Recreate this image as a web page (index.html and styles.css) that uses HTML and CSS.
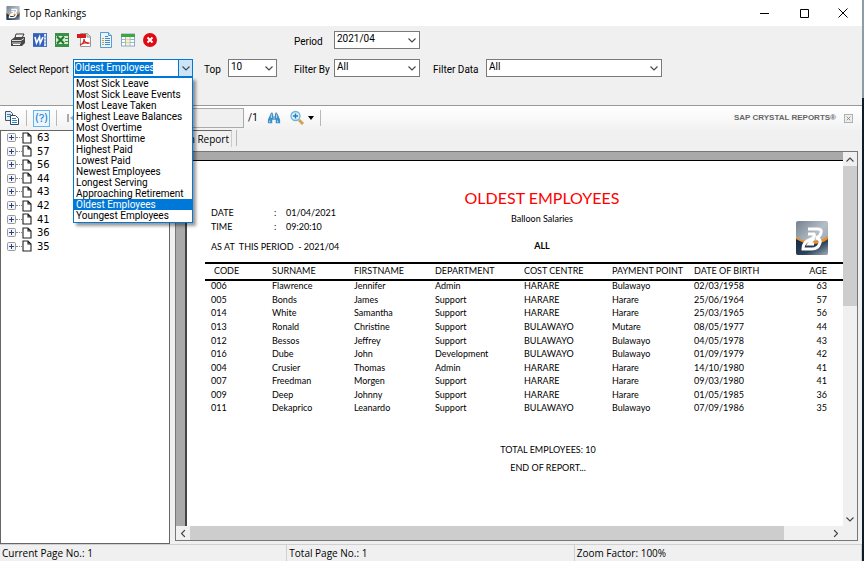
FILE: index.html
```html
<!DOCTYPE html>
<html lang="en">
<head>
<meta charset="utf-8">
<title>Top Rankings</title>
<link rel="stylesheet" href="styles.css">
</head>
<body>
<svg class="defs" aria-hidden="true">
  <defs>
    <linearGradient id="steel" x1="0" y1="0" x2="1" y2="1"><stop offset="0" stop-color="#75818f"/><stop offset=".5" stop-color="#b4bec8"/><stop offset="1" stop-color="#8b98a6"/></linearGradient>
    <linearGradient id="navy" x1="0" y1="0" x2="1" y2="1"><stop offset="0" stop-color="#12263f"/><stop offset=".6" stop-color="#2c435c"/><stop offset="1" stop-color="#a3afba"/></linearGradient>
    <symbol id="chev" viewBox="0 0 8 5"><path d="M.5.5 4 4 7.500.5" fill="none" stroke="#444" stroke-width="1.1"/></symbol>
    <symbol id="logo" viewBox="0 0 32 34">
      <rect width="32" height="34" rx="2" fill="url(#steel)"/>
      <path d="M0 17c6 4 10 5 15 5 7 0 12-2 17-6v16a2 2 0 0 1-2 2H2a2 2 0 0 1-2-2z" fill="url(#navy)"/>
      <path d="M0 16c6 4 10 4 15 4 7 0 12-1 17-5v3c-5 4-10 5-17 5-5 0-10-2-15-5z" fill="#f08a24"/>
      <path d="M12 8h10q4 0 3 4-1 4-5 5 5 1 4 5-2 6-8 6H7q0-5 4-8l6-3q2-2 1-4h-6M18 17l-5 6h5" fill="none" stroke="#fff" stroke-width="3"/>
    </symbol>
    <symbol id="page" viewBox="0 0 10 12"><path d="M1 1h5l3 3v7H1zM6 1v3h3" fill="#fff" stroke="#222" stroke-width="1.1"/></symbol>
    <symbol id="plus" viewBox="0 0 9 9"><rect x=".5" y=".5" width="8" height="8" rx="1" fill="#f4f4f4" stroke="#999"/><path d="M2 4.500h5M4.500 2v5" stroke="#24408c"/></symbol>
  </defs>
</svg>

<div class="window">
  <header class="titlebar">
    <svg class="app-icon"><use href="#logo"/></svg>
    <h1>Top Rankings</h1>
    <div class="caption-buttons">
      <button aria-label="Minimize"><svg viewBox="0 0 10 10"><path d="M0 5.500h9" stroke="#000"/></svg></button>
      <button aria-label="Maximize"><svg viewBox="0 0 10 10"><path d="M1.500 1.500h8v8h-8z" fill="none" stroke="#000"/></svg></button>
      <button aria-label="Close"><svg viewBox="0 0 10 10"><path d="M.5.5l9 9m0-9l-9 9" stroke="#000"/></svg></button>
    </div>
  </header>

  <form class="filters">
    <div class="exports">
      <button type="button" aria-label="Print"><svg viewBox="0 0 16 16"><path d="M5 6 6 2h8l-2 4" fill="#fff" stroke="#333"/><path d="M1 8l4-3h10v6l-3 3H1z" fill="#484848"/><path d="M2 8.500h9l3-2M2 11h9M7 4h5" stroke="#ddd" fill="none"/><path d="M3 12.500h7" stroke="#fff"/></svg></button>
      <button type="button" aria-label="Export to Word"><svg viewBox="0 0 16 16"><rect x="1.500" y="1.500" width="13" height="13" fill="#dce8fa" stroke="#4a74c4"/><path d="M1 2h11v12H1z" fill="#3462ba"/><path d="M3 5l1.500 6L7.500 5l.7 6L11 5" fill="none" stroke="#fff" stroke-width="1.600"/><path d="M12 5h2M12 8h2M12 11h2" stroke="#6e8fd0"/></svg></button>
      <button type="button" aria-label="Export to Excel"><svg viewBox="0 0 16 16"><rect x="1.500" y="1.500" width="13" height="13" fill="#d4ead4" stroke="#2f8a3c"/><path d="M1 1h14v3H1zM1 12h14v3H1z" fill="#3b8f46"/><path d="M3 4.500l7 7M10 4.500l-7 7" stroke="#1f7a2c" stroke-width="2.200"/><path d="M11 6.500h3M11 9.500h3" stroke="#3b8f46"/></svg></button>
      <button type="button" aria-label="Export to PDF"><svg viewBox="0 0 16 16"><path d="M4.500 1.500h7l3 3v10h-10z" fill="#fff" stroke="#999"/><path d="M11 1.500V5h3.500" fill="#ddd" stroke="#999"/><rect x="1" y="2" width="9" height="4" fill="#d51c1c"/><path d="M4 13c3-1 4-4 4-6 0 3 3 5 5 4-3-1-6 0-9 2z" fill="none" stroke="#d51c1c" stroke-width="1.200"/></svg></button>
      <button type="button" aria-label="Export to text"><svg viewBox="0 0 16 16"><path d="M2.500.5h8l3 3v12h-11z" fill="#eaf4fd" stroke="#5a9bd0"/><path d="M10.500.5v3h3" fill="#b7d7f0" stroke="#5a9bd0"/><path d="M7 4.500h3M7 6.500h5M7 8.500h5M7 10.500h5M7 12.500h5" stroke="#4a8ac4"/><path d="M4 6.500h2M4 8.500h2M4 10.500h2M4 12.500h2" stroke="#d0a030"/></svg></button>
      <button type="button" aria-label="Export to table"><svg viewBox="0 0 16 16"><rect x="1.500" y="2" width="13" height="12" fill="#fff" stroke="#88a8c0"/><path d="M1 2h14v3H1z" fill="#3da544"/><path d="M2 7.500h12M2 10.500h12M5.500 5v9M10 5v9" stroke="#9ab8cc"/><path d="M6 6h3.500v7H6z" fill="#f6e7a0" opacity=".7"/></svg></button>
      <button type="button" aria-label="Cancel"><svg viewBox="0 0 16 16"><circle cx="8" cy="8" r="7" fill="#e00a12"/><path d="M5.500 5.500l5 5m0-5l-5 5" stroke="#fff" stroke-width="2"/></svg></button>
    </div>
    <label for="period">Period</label>
    <div class="combo"><select id="period"><option>2021/04</option></select><svg class="chev"><use href="#chev"/></svg></div>

    <label class="row2" for="report">Select Report</label>
    <div class="combo open">
      <input id="report" value="Oldest Employees">
      <button type="button" aria-label="Show reports"><svg class="arrow"><use href="#chev"/></svg></button>
      <select class="menu" size="13" aria-label="Reports">
        <option>Most Sick Leave</option>
        <option>Most Sick Leave Events</option>
        <option>Most Leave Taken</option>
        <option>Highest Leave Balances</option>
        <option>Most Overtime</option>
        <option>Most Shorttime</option>
        <option>Highest Paid</option>
        <option>Lowest Paid</option>
        <option>Newest Employees</option>
        <option>Longest Serving</option>
        <option>Approaching Retirement</option>
        <option selected>Oldest Employees</option>
        <option>Youngest Employees</option>
      </select>
    </div>
    <label for="top">Top</label>
    <div class="combo top"><select id="top"><option>10</option></select><svg class="chev"><use href="#chev"/></svg></div>
    <label for="by">Filter By</label>
    <div class="combo"><select id="by"><option>All</option></select><svg class="chev"><use href="#chev"/></svg></div>
    <label for="data">Filter Data</label>
    <div class="combo data"><select id="data"><option>All</option></select><svg class="chev"><use href="#chev"/></svg></div>
  </form>

  <div class="tools">
    <button class="tool" aria-label="Copy"><svg viewBox="0 0 16 16"><path d="M1.500 1.500h5l2 2v7h-7z" fill="#e4eef6" stroke="#44586c"/><path d="M3 4.500h4M3 6.500h4" stroke="#3888c0"/><path d="M6.500 5.500h5l3 3v6h-8z" fill="#fff" stroke="#34485c"/><path d="M8 8.500h4M8 10.500h5M8 12.500h5" stroke="#2f86c4"/></svg></button>
    <span class="sep"></span>
    <button class="help" aria-label="Parameters">(?)</button>
    <span class="sep"></span>
    <button class="tool" aria-label="First page"><svg viewBox="0 0 16 16"><path d="M5 4v8" stroke="#aaa" stroke-width="2"/><path d="M12 4v8L7 8z" fill="#aaa"/></svg></button>
    <input class="page-no" aria-label="Page number" disabled>
    <span class="of">/1</span>
    <button class="tool find" aria-label="Find"><svg viewBox="0 0 16 16"><path d="M4 3h3v3h2V3h3l3 7v4h-5v-4H6v4H1v-4z" fill="#3f8fc8"/><path d="M5 4v4M11 4v4M3 11v2M12 11v2M8 6v3" stroke="#c8e6fa"/><path d="M4.500 2.500h2M9.500 2.500h2" stroke="#235e8c"/></svg></button>
    <button class="tool zoom" aria-label="Zoom"><svg viewBox="0 0 16 16"><path d="M10 10l4 4" stroke="#d9a04a" stroke-width="3"/><circle cx="6.500" cy="6" r="4.500" fill="#d4effc" stroke="#6ab4dc" stroke-width="1.300"/><path d="M4 6h5M6.500 3.500v5" stroke="#2878b8" stroke-width="1.300"/></svg><svg class="tri" viewBox="0 0 6 4"><path d="M0 0h6L3 4z"/></svg></button>
    <span class="sep"></span>
    <strong class="brand">SAP CRYSTAL REPORTS®</strong>
    <button class="close-view" aria-label="Close view"><svg viewBox="0 0 10 10"><rect x=".5" y=".5" width="9" height="9" fill="#eee" stroke="#aaa"/><path d="M3 3l4 4m0-4L3 7" stroke="#888"/></svg></button>
  </div>

  <main class="work">
    <ul class="tree">
      <li><svg class="plus"><use href="#plus"/></svg><i></i><svg class="pg"><use href="#page"/></svg>63</li>
      <li><svg class="plus"><use href="#plus"/></svg><i></i><svg class="pg"><use href="#page"/></svg>57</li>
      <li><svg class="plus"><use href="#plus"/></svg><i></i><svg class="pg"><use href="#page"/></svg>56</li>
      <li><svg class="plus"><use href="#plus"/></svg><i></i><svg class="pg"><use href="#page"/></svg>44</li>
      <li><svg class="plus"><use href="#plus"/></svg><i></i><svg class="pg"><use href="#page"/></svg>43</li>
      <li><svg class="plus"><use href="#plus"/></svg><i></i><svg class="pg"><use href="#page"/></svg>42</li>
      <li><svg class="plus"><use href="#plus"/></svg><i></i><svg class="pg"><use href="#page"/></svg>41</li>
      <li><svg class="plus"><use href="#plus"/></svg><i></i><svg class="pg"><use href="#page"/></svg>36</li>
      <li><svg class="plus"><use href="#plus"/></svg><i></i><svg class="pg"><use href="#page"/></svg>35</li>
    </ul>
    <section class="view">
      <div class="tabs"><button class="tab">Main Report</button><span class="sep"></span></div>
      <div class="viewer">
        <div class="desk">
          <article class="page">
            <div class="head">
              <dl>
                <dt>DATE</dt><dd>:</dd><dd>01/04/2021</dd>
                <dt>TIME</dt><dd>:</dd><dd>09:20:10</dd>
                <dt class="wide">AS AT&nbsp; THIS PERIOD&nbsp; - 2021/04</dt>
              </dl>
              <div class="center">
                <h2>OLDEST EMPLOYEES</h2>
                <p>Balloon Salaries</p>
                <b>ALL</b>
              </div>
              <svg class="logo"><use href="#logo"/></svg>
            </div>
            <table>
              <colgroup><col class="c1"><col class="c2"><col class="c3"><col class="c4"><col class="c5"><col class="c6"><col class="c7"><col></colgroup>
              <thead><tr><th>CODE</th><th>SURNAME</th><th>FIRSTNAME</th><th>DEPARTMENT</th><th>COST CENTRE</th><th>PAYMENT POINT</th><th>DATE OF BIRTH</th><th>AGE</th></tr></thead>
              <tbody>
                <tr><td>006</td><td>Flawrence</td><td>Jennifer</td><td>Admin</td><td>HARARE</td><td>Bulawayo</td><td>02/03/1958</td><td>63</td></tr>
                <tr><td>005</td><td>Bonds</td><td>James</td><td>Support</td><td>HARARE</td><td>Harare</td><td>25/06/1964</td><td>57</td></tr>
                <tr><td>014</td><td>White</td><td>Samantha</td><td>Support</td><td>HARARE</td><td>Harare</td><td>25/03/1965</td><td>56</td></tr>
                <tr><td>013</td><td>Ronald</td><td>Christine</td><td>Support</td><td>BULAWAYO</td><td>Mutare</td><td>08/05/1977</td><td>44</td></tr>
                <tr><td>012</td><td>Bessos</td><td>Jeffrey</td><td>Support</td><td>BULAWAYO</td><td>Bulawayo</td><td>04/05/1978</td><td>43</td></tr>
                <tr><td>016</td><td>Dube</td><td>John</td><td>Development</td><td>BULAWAYO</td><td>Bulawayo</td><td>01/09/1979</td><td>42</td></tr>
                <tr><td>004</td><td>Crusier</td><td>Thomas</td><td>Admin</td><td>HARARE</td><td>Harare</td><td>14/10/1980</td><td>41</td></tr>
                <tr><td>007</td><td>Freedman</td><td>Morgen</td><td>Support</td><td>HARARE</td><td>Harare</td><td>09/03/1980</td><td>41</td></tr>
                <tr><td>009</td><td>Deep</td><td>Johnny</td><td>Support</td><td>HARARE</td><td>Harare</td><td>01/05/1985</td><td>36</td></tr>
                <tr><td>011</td><td>Dekaprico</td><td>Leanardo</td><td>Support</td><td>BULAWAYO</td><td>Bulawayo</td><td>07/09/1986</td><td>35</td></tr>
              </tbody>
            </table>
            <footer><p>TOTAL EMPLOYEES: 10</p><p>END OF REPORT...</p></footer>
          </article>
        </div>
        <div class="bar vertical">
          <button aria-label="Scroll up"><svg class="up"><use href="#chev"/></svg></button>
          <span class="thumb"></span>
          <button aria-label="Scroll down"><svg><use href="#chev"/></svg></button>
        </div>
        <div class="bar horizontal">
          <button aria-label="Scroll left"><svg class="left"><use href="#chev"/></svg></button>
          <span class="thumb"></span>
          <button aria-label="Scroll right"><svg class="right"><use href="#chev"/></svg></button>
        </div>
      </div>
    </section>
  </main>

  <footer class="status"><span>Current Page No.: 1</span><span>Total Page No.: 1</span><span>Zoom Factor: 100%</span></footer>
</div>
</body>
</html>
```

FILE: styles.css
```css
* { box-sizing: border-box; }
body { margin: 0; background: linear-gradient(#8d9da5 98px, #0c1c28 98px); color: #000; font: 10px/14px Roboto, "Liberation Sans", Arial, sans-serif; }
button { margin: 0; padding: 0; border: 0; background: none; font: inherit; color: inherit; display: grid; place-items: center; }
input, select { margin: 0; border: 0; padding: 0; border-radius: 0; font: inherit; color: #000; }
p, h1, h2, dl, dd, ul { margin: 0; padding: 0; font-weight: normal; }
svg { display: block; }
.defs { position: absolute; width: 0; height: 0; }

.window { margin-right: 2px; height: 100vh; display: flex; flex-direction: column; background: #f0f0f0; }

.titlebar { height: 26px; background: #fff; display: flex; align-items: center; padding-left: 6px; gap: 4px; }
.app-icon { width: 14px; height: 14px; }
.titlebar h1 { font: 10px/16px "Open Sans", sans-serif; }
.caption-buttons { margin-left: auto; display: flex; }
.caption-buttons button { width: 39px; height: 24px; }
.caption-buttons svg { width: 10px; height: 10px; }

.filters { height: 79px; padding: 5px 0 0 9px; display: grid; grid-template: 18px 18px / 64px 131px 24px 66px 40px 99px 53px 176px; row-gap: 10px; }
.filters label { padding-top: 4px; white-space: nowrap; }
.row2 { grid-column: 1; }
.exports { grid-column: 1 / 5; display: flex; align-items: center; gap: 6px; padding-left: 1px; }
.exports svg { width: 16px; height: 16px; }
.combo { position: relative; width: 86px; height: 18px; }
.combo.top { width: 49px; }
.combo.data { width: 176px; }
.combo > select:not(.menu) { appearance: none; width: 100%; height: 100%; padding: 0 0 2px 2px; border: 1px solid #7a7a7a; background: #fff; }
.chev { position: absolute; right: 4px; top: 7px; width: 8px; height: 5px; }
.arrow { width: 8px; height: 5px; }
.combo.open { width: 120px; display: flex; justify-content: space-between; border: 1px solid #0078d7; background: #fff; }
.open input { width: 78px; height: 12px; margin: 2px 1px; background: #0078d7; color: #fff; }
.open button { width: 14px; background: #cce4f7; border-left: 1px solid #0078d7; }
.menu { position: absolute; z-index: 2; top: 17px; left: -1px; width: 120px; height: 146px; border: 1px solid #0078d7; background: #fff; overflow: hidden; box-shadow: 3px 3px 3px #0006; outline: 0; scrollbar-width: none; }
.menu option { height: 11px; min-height: 11px; padding: 0 2px; line-height: 11px; }
.menu option:checked { background: linear-gradient(#0078d7, #0078d7); color: #fff; }

.tools { height: 25px; border-top: 1px solid #999; background: linear-gradient(#fff, #f2f2f2); display: flex; align-items: center; padding: 0 9px 0 4px; }
.tool { height: 16px; display: flex; align-items: center; }
.tool svg { width: 16px; height: 16px; }
.sep { width: 1px; height: 16px; background: #b8b8b8; }
.tools .sep { margin: 0 6px; }
.help { width: 17px; height: 17px; border: 1px solid #66b5f0; background: #eaf5fd; color: #1979c4; font: 11px/14px Inter, sans-serif; }
.page-no { width: 165px; height: 20px; border: 1px solid #aaa; background: #f0f0f0; }
.of { margin: 0 9px 0 4px; }
.find svg { width: 14px; height: 14px; }
.zoom { margin-left: 8px; gap: 3px; }
.zoom .tri { width: 6px; height: 4px; }
.brand { margin-left: auto; margin-right: 8px; color: #666; font-size: 8px; font-family: "Liberation Sans", Arial, sans-serif; }
.close-view svg { width: 9px; height: 9px; }

.work { flex: 1; min-height: 0; display: flex; gap: 5px; padding-right: 4px; }
.tree { width: 170px; border: 1px solid #666; background: #fff; list-style: none; padding-left: 6px; font: 10px/13px "DejaVu Sans", sans-serif; display: grid; grid-template-rows: repeat(9, 1fr); padding-bottom: 290px; }
.tree li { display: flex; align-items: center; }
.plus { width: 9px; height: 9px; }
.tree i { width: 6px; border-top: 1px dotted #888; }
.pg { width: 10px; height: 12px; margin-right: 5px; }
.view { flex: 1; min-width: 0; display: flex; flex-direction: column; }
.tabs { height: 21px; display: flex; gap: 4px; }
.tab { width: 57px; height: 17px; padding-right: 2px; border-top: 1px solid #666; border-right: 1px solid #ccc; font: 10px/14px "Open Sans", sans-serif; white-space: nowrap; place-items: center end; justify-content: end; }
.viewer { flex: 1; min-height: 0; margin-bottom: 3px; border: 1px solid #777; display: grid; grid-template: minmax(0, 1fr) 14px / minmax(0, 1fr) 14px; }
.desk { background: #a9a9a9; padding: 8px 0 0 9px; display: grid; grid-template-columns: minmax(0, 1fr); }
.page { background: #fff; border-top: 1px solid #000; border-left: 2px solid #444; padding: 24px 0 0 18px; font: 9px/14px Lato, sans-serif; }
.head { display: grid; grid-template-columns: 258px 158px 1fr; height: 77px; }
.head dl { display: grid; grid-template-columns: 63px 12px 1fr; padding: 21px 0 0 6px; align-content: start; }
.wide { grid-column: 1 / 4; padding-top: 6px; }
.center { text-align: center; display: flex; flex-direction: column; }
.center h2 { color: #f00; font-size: 16px; line-height: 25px; margin-bottom: 2px; white-space: nowrap; }
.center b { margin-top: 13px; }
.logo { width: 32px; height: 34px; margin: 36px 15px 0 auto; }
table { width: 100%; height: 155px; table-layout: fixed; border-collapse: collapse; }
thead tr { height: 17px; border-top: 2px solid #000; border-bottom: 2px solid #000; }
th { font-weight: normal; }
th, td { padding: 0; text-align: left; line-height: 10px; vertical-align: top; white-space: nowrap; }
th { line-height: 13px; }
td:first-child { padding-left: 6px; }
th:first-child { padding-left: 9px; }
td:last-child, th:last-child { text-align: right; padding-right: 16px; }
.c1 { width: 67px; } .c2 { width: 82px; } .c3 { width: 81px; } .c4 { width: 89px; } .c5 { width: 88px; } .c6 { width: 82px; } .c7 { width: 85px; }
.page footer { padding: 26px 0 0 48px; text-align: center; display: grid; gap: 4px; }
.bar { display: flex; background: #f0f0f0; }
.bar button { width: 14px; height: 14px; }
.bar svg { width: 8px; height: 5px; }
.thumb { background: #cdcdcd; }
.vertical { flex-direction: column; }
.vertical .thumb { flex: 0 1 140px; }
.vertical button:last-child { margin-top: auto; }
.horizontal .thumb { flex: 0 1 594px; }
.horizontal button:last-child { margin-left: auto; }
.up { transform: rotate(180deg); }
.left { transform: rotate(90deg); }
.right { transform: rotate(-90deg); }
.horizontal { grid-column: 1 / 3; padding-right: 14px; }

.status { height: 17px; border-top: 1px solid #d0d0d0; display: grid; grid-template-columns: 1fr 1fr 1fr; font: 10px/16px "Open Sans", sans-serif; }
.status span { padding-left: 2px; border-right: 1px solid #d0d0d0; }
```
